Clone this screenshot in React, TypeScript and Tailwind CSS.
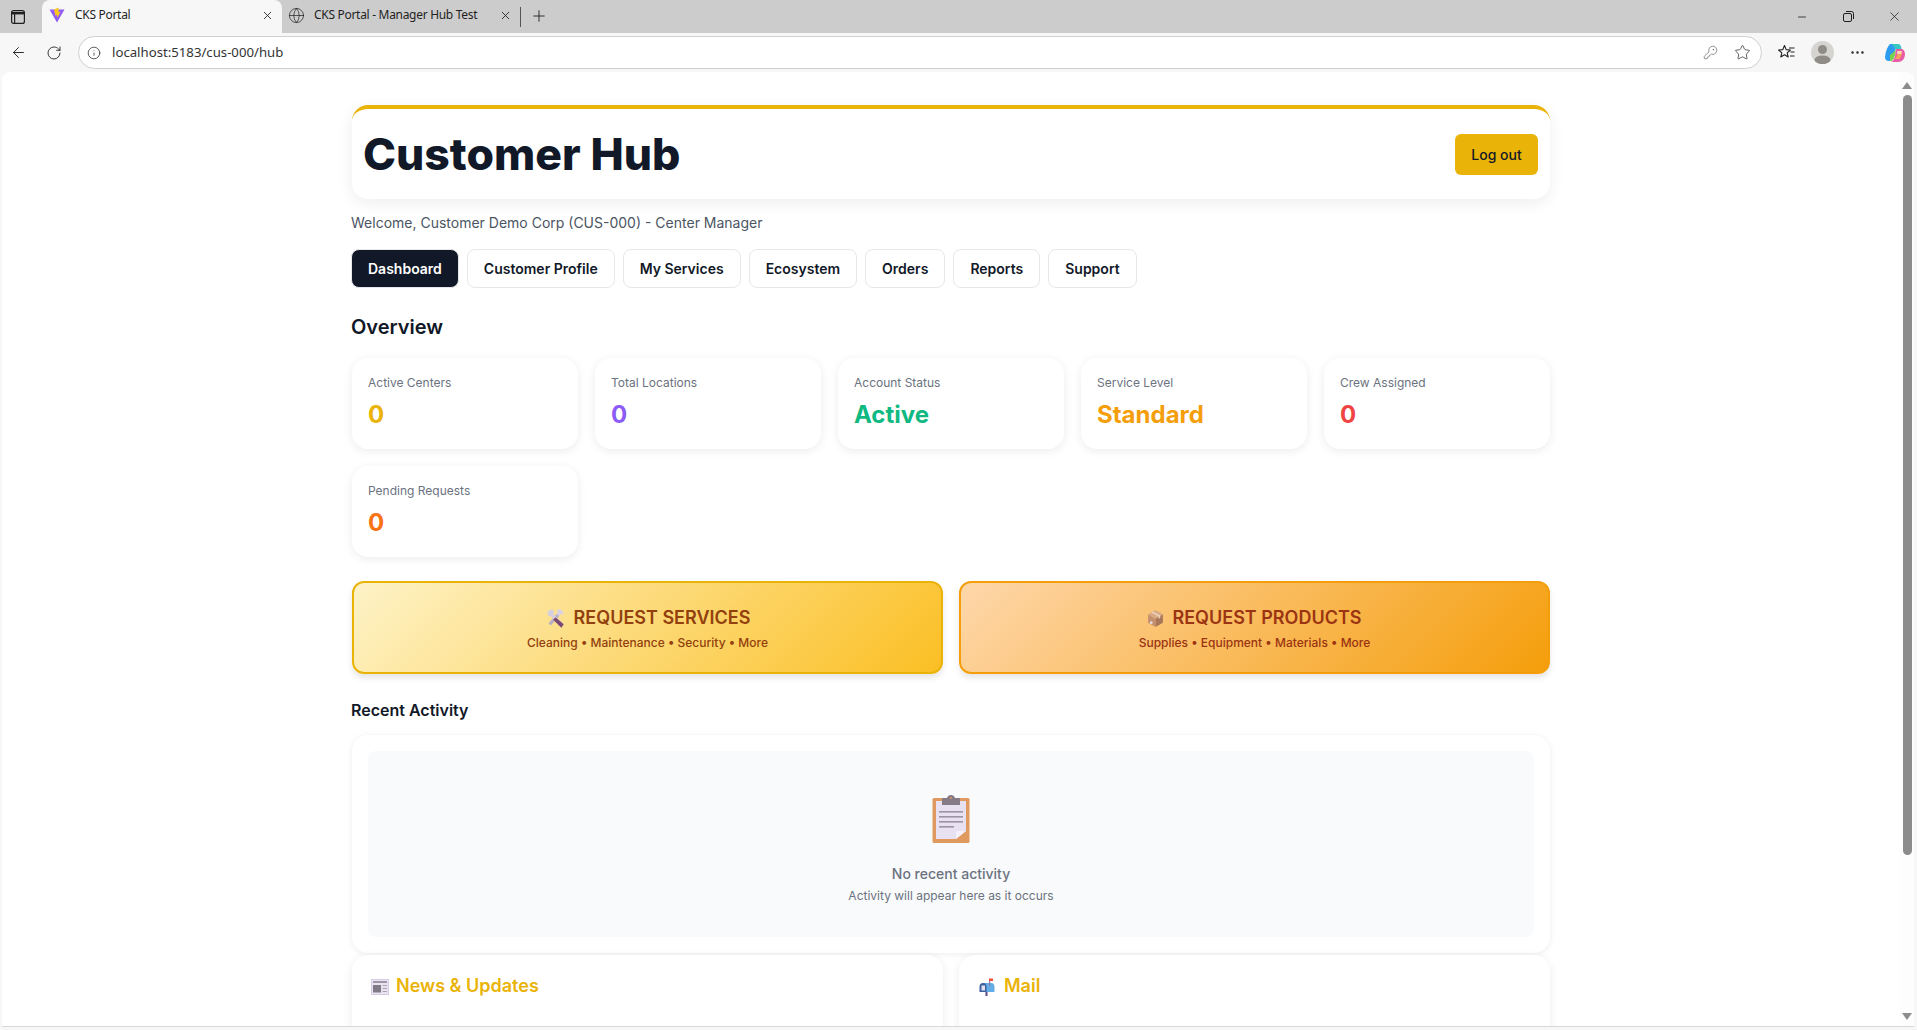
import { ArrowLeft, RotateCw, Info, KeyRound, Star, Plus, X, Minus, Globe, MoreHorizontal } from 'lucide-react'

const tabs = ['Dashboard', 'Customer Profile', 'My Services', 'Ecosystem', 'Orders', 'Reports', 'Support']

const stats = [
  { label: 'Active Centers', value: '0', color: 'text-[#eab308]' },
  { label: 'Total Locations', value: '0', color: 'text-[#8b5cf6]' },
  { label: 'Account Status', value: 'Active', color: 'text-[#10b981]' },
  { label: 'Service Level', value: 'Standard', color: 'text-[#f59e0b]' },
  { label: 'Crew Assigned', value: '0', color: 'text-[#ef4444]' },
  { label: 'Pending Requests', value: '0', color: 'text-[#f97316]' },
]

function ViteLogo() {
  return (
    <svg width="16" height="16" viewBox="0 0 16 16">
      <path d="M0.5 2.5 L15.5 2.5 L8 15.5 Z" fill="#8f5cf6" />
      <path d="M9.5 0.5 L5 2.5 L6.5 9 L8 7.5 L8.5 11 L11.5 4.5 L9.5 5 Z" fill="#fdc61e" />
    </svg>
  )
}

function CopilotLogo() {
  return (
    <svg width="22" height="22" viewBox="0 0 22 22">
      <path d="M6 2 H13 L9 15 Q8 19 5 19 Q1 19 1 15 Q2 6 6 2 Z" fill="#2d9bf0" />
      <path d="M8 2 H14 Q17 2 17.5 7 L12 8 Z" fill="#37c9c1" />
      <path d="M6 13 L12 8 L11 13 Q10 19 6 19 Z" fill="#7ad14f" />
      <path d="M12 7 H18 Q21 8 21 13 Q20 20 14 20 H7 Q10 19 11 14 Z" fill="#e85ca8" />
      <path d="M14 9 H18 Q18 15 15 17 H11 Q13 15 14 9 Z" fill="#f7a25b" />
      <path d="M13 9 L18 9 L17 12 L13 12 Z" fill="#ffffff" opacity="0.55" />
    </svg>
  )
}

function SidebarIcon() {
  return (
    <svg width="14" height="14" viewBox="0 0 14 14" fill="none" stroke="#1f1f1f" strokeWidth="1.2">
      <rect x="0.6" y="0.6" width="12.8" height="12.8" rx="2" />
      <path d="M0.6 3.2 H13.4" strokeWidth="2.4" />
      <path d="M3.6 3 V13" />
    </svg>
  )
}

function FavoritesIcon() {
  return (
    <svg width="17" height="17" viewBox="0 0 17 17" fill="none" stroke="#1f1f1f" strokeWidth="1.1" strokeLinejoin="round">
      <path d="M6.5 1.5 L8.2 5.6 L12.4 6 L9.2 8.8 L10.2 13 L6.5 10.8 L2.8 13 L3.8 8.8 L0.6 6 L4.8 5.6 Z" />
      <path d="M11 4 H16.5 M12.5 8 H16.5 M12 12 H16.5" />
    </svg>
  )
}

function ToolsEmoji() {
  return (
    <svg width="21" height="21" viewBox="0 0 18 18">
      <path d="M3 13 L11 4 L13 6 L5 15 Z" fill="#b9aec6" />
      <path d="M11 1 Q16 1 16 6 L14 5 L12 7 L10 5 Z" fill="#d9d2e3" />
      <path d="M2 3 L6 1 L8 3 L7 5 L16 14 L14 17 L5 7 L3 7 Z" fill="#d6cfe0" />
      <path d="M9 8 L16 14 L14 17 L7 10 Z" fill="#7a4a73" />
    </svg>
  )
}

function BoxEmoji() {
  return (
    <svg width="17" height="19" viewBox="0 0 16 18">
      <path d="M1 5 L8 9 V17 L1 13 Z" fill="#c38f6d" />
      <path d="M8 9 L15 5 V13 L8 17 Z" fill="#a9765a" />
      <path d="M1 5 L8 1 L15 5 L8 9 Z" fill="#d9a985" />
      <path d="M4 3.3 L11 7.2 V9.5 L12.5 8.5 V6.2 L5.6 2.4 Z" fill="#eed2b7" />
      <circle cx="4" cy="13" r="1.3" fill="#e4dcea" />
    </svg>
  )
}

function ClipboardEmoji() {
  return (
    <svg width="38" height="48" viewBox="0 0 38 48">
      <rect x="0.5" y="3" width="37" height="45" rx="1.5" fill="#e0995e" />
      <path d="M4 6 H34 V36 L24 44 H4 Z" fill="#e7e1f1" />
      <path d="M24 44 V37 Q24 36 25 36 H34 Z" fill="#f4f1f8" />
      <path d="M10 7 V4 Q10 3 11 3 H15 Q16 0 19 0 Q22 0 23 3 H27 Q28 3 28 4 V10 H10 Z" fill="#857a86" />
      <circle cx="19" cy="3" r="1" fill="#e0995e" />
      <rect x="7" y="16" width="24" height="1.6" fill="#9c93a3" />
      <rect x="7" y="21" width="24" height="1.6" fill="#9c93a3" />
      <rect x="7" y="26" width="24" height="1.6" fill="#9c93a3" />
      <rect x="7" y="31" width="15" height="1.6" fill="#9c93a3" />
    </svg>
  )
}

function NewsEmoji() {
  return (
    <svg width="18" height="16" viewBox="0 0 18 16">
      <rect x="0.5" y="0.5" width="17" height="15" fill="#e9e3f2" stroke="#d5cbe4" />
      <rect x="2" y="2" width="14" height="2" fill="#9d96a3" />
      <rect x="2" y="6" width="8" height="7.5" fill="#7f7a85" />
      <rect x="11.5" y="6" width="4.5" height="1" fill="#a9a2b0" />
      <rect x="11.5" y="9" width="4.5" height="1" fill="#a9a2b0" />
      <rect x="11.5" y="12" width="4.5" height="1" fill="#a9a2b0" />
    </svg>
  )
}

function MailEmoji() {
  return (
    <svg width="16" height="18" viewBox="0 0 16 18">
      <rect x="6.5" y="6" width="2" height="12" fill="#5d4a86" />
      <path d="M4 5 H12 Q15.5 5 15.5 9 V14 H4 Z" fill="#62ade6" />
      <path d="M4 5 Q0.5 5 0.5 9 V14 H7.5 V9 Q7.5 5 4 5 Z" fill="#3c5f9e" />
      <rect x="2.5" y="7.5" width="3.5" height="5" fill="#e4dfee" />
      <rect x="10" y="1" width="1.2" height="7" fill="#8d7aa8" />
      <rect x="10" y="0.5" width="4" height="2.5" fill="#ef4e3c" />
    </svg>
  )
}

function BrowserChrome() {
  return (
    <div className="shrink-0 font-['Noto_Sans',sans-serif] text-[#1f1f1f]">
      <div className="flex h-[33px] items-end bg-[#cccccc]">
        <div className="flex h-[33px] w-[36px] items-center justify-center">
          <SidebarIcon />
        </div>
        <div className="w-[6px]" />
        <div className="flex h-[33px] w-[240px] items-center rounded-t-lg bg-[#f7f7f7] pb-[3px] pl-[7px] pr-[8px]">
          <ViteLogo />
          <span className="ml-[10px] flex-1 text-[12px] tracking-[-0.3px]">CKS Portal</span>
          <X size={13} strokeWidth={1.6} />
        </div>
        <div className="flex h-[33px] w-[238px] items-center pb-[3px] pl-[6px] pr-[8px]">
          <Globe size={17} strokeWidth={1} />
          <span className="ml-[9px] flex-1 text-[12px] tracking-[-0.3px]">CKS Portal - Manager Hub Test</span>
          <X size={13} strokeWidth={1.6} />
        </div>
        <div className="mb-[6px] h-[20px] w-px bg-[#555555]" />
        <div className="flex h-[33px] w-[36px] items-center justify-center pb-[2px]">
          <Plus size={18} strokeWidth={1.2} />
        </div>
        <div className="flex-1" />
        <div className="flex h-[33px] w-[46px] items-center justify-center">
          <Minus size={12} strokeWidth={1.6} />
        </div>
        <div className="flex h-[33px] w-[46px] items-center justify-center">
          <svg width="11" height="11" viewBox="0 0 11 11" fill="none" stroke="#1f1f1f">
            <rect x="0.5" y="2.5" width="8" height="8" rx="1.5" />
            <path d="M3 0.5 H8.5 Q10.5 0.5 10.5 2.5 V8" />
          </svg>
        </div>
        <div className="flex h-[33px] w-[46px] items-center justify-center">
          <X size={15} strokeWidth={1.2} />
        </div>
      </div>
      <div className="flex h-[39px] items-center bg-[#f7f7f7]">
        <div className="flex w-[36px] justify-center">
          <ArrowLeft size={17} strokeWidth={1.3} />
        </div>
        <div className="flex w-[36px] justify-center">
          <RotateCw size={16} strokeWidth={1.3} />
        </div>
        <div className="ml-[6px] flex h-[33px] w-[1684px] items-center rounded-full border border-[#cfcfcf] bg-white pl-[8px] pr-[10px]">
          <Info size={14} strokeWidth={1.2} />
          <span className="ml-[11px] flex-1 text-[13.2px] text-[#333333]">localhost:5183/cus-000/hub</span>
          <KeyRound size={15} strokeWidth={1} className="mr-[16px] text-[#555555]" />
          <Star size={17} strokeWidth={1.2} className="text-[#444444]" />
        </div>
        <div className="ml-[16px]">
          <FavoritesIcon />
        </div>
        <div className="ml-[16px] flex h-[23px] w-[23px] items-center justify-center overflow-hidden rounded-full bg-[#d6d4d0]">
          <svg width="23" height="23" viewBox="0 0 23 23" fill="#8f8b86">
            <circle cx="11.5" cy="8.5" r="4.5" />
            <ellipse cx="11.5" cy="19" rx="8" ry="4.5" />
          </svg>
        </div>
        <MoreHorizontal size={17} strokeWidth={1.5} className="ml-[15px]" />
        <div className="ml-[18px]">
          <CopilotLogo />
        </div>
      </div>
    </div>
  )
}

function ScrollBar() {
  return (
    <div className="flex w-[14px] shrink-0 flex-col items-center bg-[#fdfdfd] pt-[10px]">
      <div className="h-0 w-0 border-x-[5px] border-b-[7px] border-x-transparent border-b-[#8c8c8c]" />
      <div className="mt-[6px] h-[760px] w-[9px] rounded-full bg-[#8c8c8c]" />
      <div className="flex-1" />
      <div className="mb-[6px] h-0 w-0 border-x-[5px] border-t-[7px] border-x-transparent border-t-[#8c8c8c]" />
    </div>
  )
}

function ActionCard({ icon, title, sub, cls }: { icon: React.ReactNode; title: string; sub: string; cls: string }) {
  return (
    <div className={`flex h-[93px] flex-col items-center justify-center rounded-xl border-2 shadow-[0_4px_6px_rgba(0,0,0,0.1)] ${cls}`}>
      <div className="flex items-center gap-[8px] text-[18px] font-semibold leading-[28px]">
        {icon}
        <span>{title}</span>
      </div>
      <div className="mt-[3px] text-[12px] font-medium leading-[16px]">{sub}</div>
    </div>
  )
}

export default function App() {
  return (
    <div className="flex h-[1030px] w-[1917px] flex-col overflow-hidden bg-[#f7f7f7] font-['Inter',sans-serif]">
      <BrowserChrome />
      <div className="flex min-h-0 flex-1 pb-[3px] pl-[2px] pr-[3px]">
        <div className="flex min-w-0 flex-1 overflow-hidden rounded-t-lg border-b border-[#d8d8d8] bg-white">
          <div className="min-w-0 flex-1 overflow-hidden pt-[33px]">
            <div className="mx-auto w-[1198px]">
              <div className="flex h-[94px] items-center justify-between rounded-2xl border-t-4 border-[#eab308] bg-white pl-[11px] pr-[12px] shadow-[0_4px_16px_rgba(0,0,0,0.07)]">
                <h1 className="text-[44.5px] font-extrabold leading-none text-[#111827]">Customer Hub</h1>
                <button className="flex h-[41px] w-[83px] items-center justify-center rounded-md bg-[#eab308] text-[14px] font-medium text-[#111827]">Log out</button>
              </div>
              <p className="-ml-px mt-[14px] text-[14px] leading-[20px] text-[#4b5563]">Welcome, Customer Demo Corp (CUS-000) - Center Manager</p>
              <div className="-ml-px mt-[16px] flex gap-[8px]">
                {tabs.map((tab, i) => (
                  <button
                    key={tab}
                    className={i === 0
                      ? 'h-[39px] rounded-lg border border-[#e5e7eb] bg-[#111827] px-[16px] text-[14px] font-semibold text-white'
                      : 'h-[39px] rounded-lg border border-[#e5e7eb] bg-white px-[16px] text-[14px] font-semibold text-[#111827]'}
                  >
                    {tab}
                  </button>
                ))}
              </div>
              <h2 className="-ml-px mt-[25px] text-[20px] font-semibold leading-[28px] text-[#111827]">Overview</h2>
              <div className="mt-[17px] grid grid-cols-5 gap-[17px]">
                {stats.map((stat) => (
                  <div key={stat.label} className="h-[91px] rounded-2xl bg-white px-[16px] pt-[17px] shadow-[0_2px_10px_rgba(0,0,0,0.08)]">
                    <div className="text-[12px] leading-[16px] text-[#6b7280]">{stat.label}</div>
                    <div className={`mt-[8px] text-[24px] font-bold leading-[32px] ${stat.color}`}>{stat.value}</div>
                  </div>
                ))}
              </div>
              <div className="mt-[24px] grid grid-cols-2 gap-[16px]">
                <ActionCard icon={<ToolsEmoji />} title="REQUEST SERVICES" sub="Cleaning • Maintenance • Security • More" cls="border-[#eab308] bg-[linear-gradient(135deg,#fef3c7,#fbbf24)] text-[#92400e]" />
                <ActionCard icon={<BoxEmoji />} title="REQUEST PRODUCTS" sub="Supplies • Equipment • Materials • More" cls="border-[#f59e0b] bg-[linear-gradient(135deg,#fed7aa,#f59e0b)] text-[#9a3412]" />
              </div>
              <h3 className="-ml-px mt-[24px] text-[16px] font-semibold leading-[24px] text-[#111827]">Recent Activity</h3>
              <div className="mt-[13px] rounded-2xl bg-white p-[16px] shadow-[0_1px_6px_rgba(0,0,0,0.08)]">
                <div className="flex h-[186px] flex-col items-center rounded-lg bg-[#f9fafb] pt-[44px]">
                  <ClipboardEmoji />
                  <div className="mt-[21px] text-[14px] font-medium leading-[20px] text-[#6b7280]">No recent activity</div>
                  <div className="mt-[4px] text-[12px] leading-[16px] text-[#6b7280]">Activity will appear here as it occurs</div>
                </div>
              </div>
              <div className="mt-[2px] grid grid-cols-2 gap-[16px]">
                <div className="flex h-[120px] items-start gap-[7px] rounded-2xl bg-white px-[19px] pt-[17px] shadow-[0_2px_10px_rgba(0,0,0,0.08)]">
                  <div className="mt-[7px]"><NewsEmoji /></div>
                  <span className="text-[18px] font-semibold leading-[28px] text-[#eab308]">News &amp; Updates</span>
                </div>
                <div className="flex h-[120px] items-start gap-[9px] rounded-2xl bg-white px-[20px] pt-[17px] shadow-[0_2px_10px_rgba(0,0,0,0.08)]">
                  <div className="mt-[6px]"><MailEmoji /></div>
                  <span className="text-[18px] font-semibold leading-[28px] text-[#eab308]">Mail</span>
                </div>
              </div>
            </div>
          </div>
          <ScrollBar />
        </div>
      </div>
    </div>
  )
}
